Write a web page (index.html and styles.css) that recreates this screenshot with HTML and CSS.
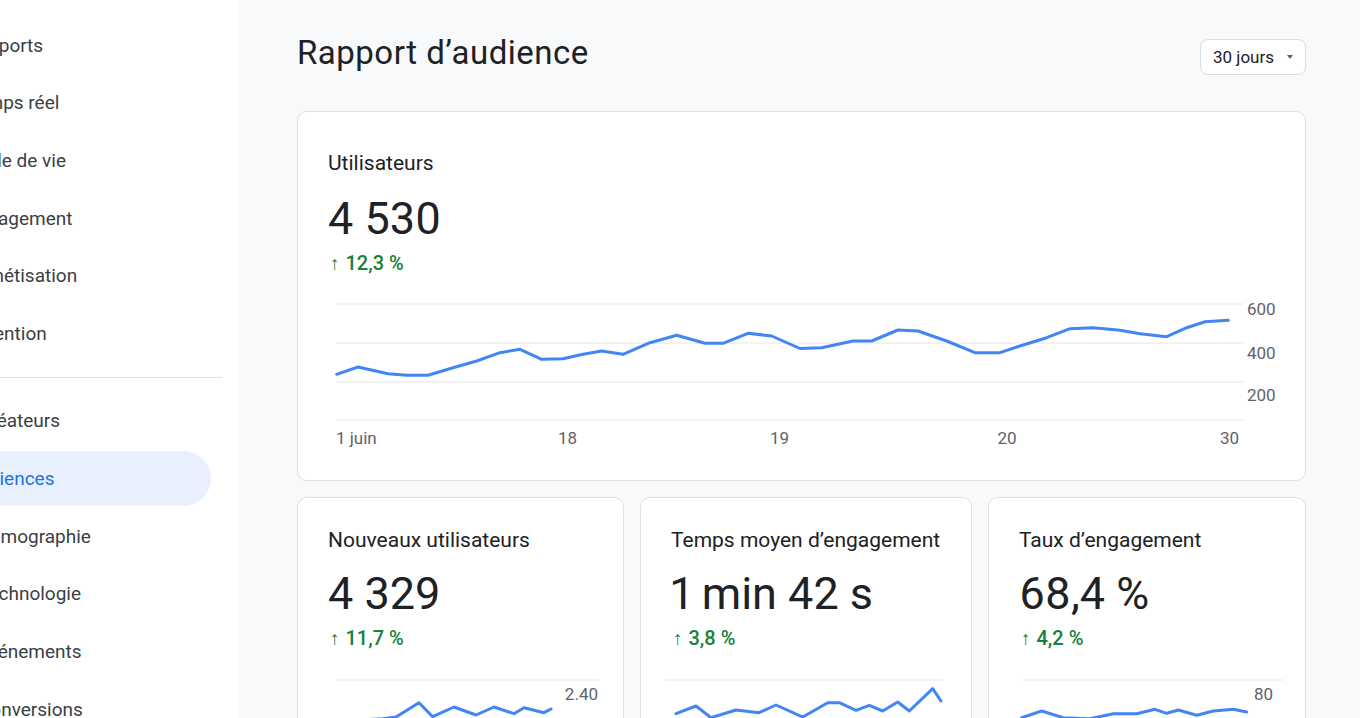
FILE: index.html
```html
<!DOCTYPE html>
<html lang="fr">
<head>
<meta charset="utf-8">
<title>Rapport d’audience</title>
<link rel="stylesheet" href="styles.css">
</head>
<body>
<aside class="sidebar">
  <nav class="nav">
    <a class="nav-item">Rapports</a>
    <a class="nav-item">Temps réel</a>
    <a class="nav-item">Cycle de vie</a>
    <a class="nav-item">Engagement</a>
    <a class="nav-item">Monétisation</a>
    <a class="nav-item">Rétention</a>
    <div class="nav-divider"></div>
    <a class="nav-item sub">Créateurs</a>
    <a class="nav-item active">Audiences</a>
    <a class="nav-item sub">Démographie</a>
    <a class="nav-item sub">Technologie</a>
    <a class="nav-item sub">Événements</a>
    <a class="nav-item sub">Conversions</a>
  </nav>
</aside>
<main class="main">
  <header class="page-header">
    <h1 class="page-title">Rapport d’audience</h1>
    <button class="range-btn"><span>30 jours</span><span class="caret"></span></button>
  </header>

  <section class="card card-main">
    <div class="metric-title">Utilisateurs</div>
    <div class="metric-value">4 530</div>
    <div class="metric-delta"><span class="arrow">↑</span>12,3 %</div>
    <svg class="chart-main" width="947" height="160" viewBox="0 0 947 160">
      <g class="grid">
        <line x1="8" y1="11" x2="915" y2="11"/>
        <line x1="8" y1="50" x2="915" y2="50"/>
        <line x1="8" y1="89" x2="915" y2="89"/>
        <line x1="8" y1="127" x2="915" y2="127"/>
      </g>
      <polyline class="line" points="8.7,81.3 30,74 60,80.7 78.7,82.3 100,82.3 125,74.7 148.7,68 172,59.7 192,56.3 213.7,66.3 235,65.7 255,61.3 273.7,58 295,61.3 322,49.7 348.7,42.3 377,50.3 395,50.3 420,40.3 443.7,43 472,55.5 493.7,54.7 525,48 543.7,48 570,37 590,38 618.7,48 647,59.7 672,59.7 692,53 718.7,44.7 742,35.7 765,34.7 792,37.3 812,40.7 838.7,43.7 858.7,34.7 877,28.7 900.3,27.3"/>
      <g class="axis">
        <text x="919" y="22">600</text>
        <text x="919" y="66">400</text>
        <text x="919" y="108">200</text>
        <text x="8" y="151">1 juin</text>
        <text x="239.5" y="151" text-anchor="middle">18</text>
        <text x="451.5" y="151" text-anchor="middle">19</text>
        <text x="679" y="151" text-anchor="middle">20</text>
        <text x="911" y="151" text-anchor="end">30</text>
      </g>
    </svg>
  </section>

  <div class="card-row">
    <section class="card card-small">
      <div class="metric-title">Nouveaux utilisateurs</div>
      <div class="metric-value">4 329</div>
      <div class="metric-delta"><span class="arrow">↑</span>11,7 %</div>
      <svg class="spark" width="265" height="60" viewBox="0 0 265 60">
        <line class="grid-line" x1="8" y1="7" x2="270" y2="7"/>
        <polyline class="line" points="8,48 32,47 54.7,45.7 68,44 91,29.7 104.7,43.7 126,34 148,42 166,34 186,40.7 196,34.7 216,39.7 223,36"/>
        <text class="axis-label" x="270" y="27" text-anchor="end">2.40</text>
      </svg>
    </section>
    <section class="card card-small">
      <div class="metric-title">Temps moyen d’engagement</div>
      <div class="metric-value">1 min 42 s</div>
      <div class="metric-delta"><span class="arrow">↑</span>3,8 %</div>
      <svg class="spark" width="270" height="60" viewBox="0 0 270 60">
        <line class="grid-line" x1="-5" y1="7" x2="271" y2="7"/>
        <polyline class="line" points="5,40.7 25,33 40,44.7 65,37 88,39.7 105,32 131.7,44 156.7,29.7 168.3,29.7 185,37.3 198.3,32.3 211.7,38 226.7,29 238.3,38 261.7,15.7 270,28"/>
      </svg>
    </section>
    <section class="card card-small">
      <div class="metric-title">Taux d’engagement</div>
      <div class="metric-value">68,4 %</div>
      <div class="metric-delta"><span class="arrow">↑</span>4,2 %</div>
      <svg class="spark" width="256" height="60" viewBox="0 0 256 60">
        <line class="grid-line" x1="3" y1="7" x2="264" y2="7"/>
        <polyline class="line" points="2.7,44.7 22.7,38 44.3,44.7 71,45.7 94.3,40.7 117.7,40.7 136,36.3 147.7,40.3 159.3,37 177.7,42.3 194.3,38 214.3,36.3 227.7,39"/>
        <text class="axis-label" x="254" y="27" text-anchor="end">80</text>
      </svg>
    </section>
  </div>
</main>
</body>
</html>
```

FILE: styles.css
```css
* {
  box-sizing: border-box;
}

html, body {
  margin: 0;
  padding: 0;
}

body {
  display: flex;
  height: 718px;
  overflow: hidden;
  font-family: Roboto, "Liberation Sans", sans-serif;
  color: #202124;
  background: #f8f9fa;
}

/* Sidebar */
.sidebar {
  flex: 0 0 238px;
  width: 238px;
  height: 100%;
  background: #ffffff;
  overflow: hidden;
}

.nav {
  display: flex;
  flex-direction: column;
  gap: 2.7px;
  padding-top: 17.5px;
}

.nav-item {
  display: flex;
  align-items: center;
  height: 55px;
  margin-left: -40px;
  margin-right: 27px;
  padding-left: 6px;
  font-size: 19px;
  color: #3c4043;
  white-space: nowrap;
  border-radius: 0 28px 28px 0;
}

.nav-item.sub {
  padding-left: 18px;
}

.nav-item.active {
  background: #e8f0fe;
  color: #1a73e8;
}

.nav-divider {
  height: 1px;
  background: #e3e3e3;
  margin: 13.3px 16px 12.8px 0;
}

/* Main */
.main {
  flex: 1;
  min-width: 0;
  padding: 0 54px 0 59px;
}

.page-header {
  display: flex;
  justify-content: space-between;
  align-items: flex-start;
  padding-top: 33px;
}

.page-title {
  margin: 0;
  font-size: 33px;
  line-height: 40px;
  font-weight: 400;
  letter-spacing: 0.5px;
  color: #202124;
}

.range-btn {
  display: flex;
  align-items: center;
  gap: 13px;
  height: 36px;
  margin-top: 6px;
  padding: 0 12px;
  border: 1px solid #dadce0;
  border-radius: 8px;
  background: #ffffff;
  font-family: inherit;
  font-size: 17px;
  color: #202124;
}

.caret {
  width: 0;
  height: 0;
  border-left: 3.5px solid transparent;
  border-right: 3.5px solid transparent;
  border-top: 4px solid #5f6368;
}

/* Cards */
.card {
  background: #ffffff;
  border: 1px solid #e0e0e0;
  border-radius: 10px;
  padding: 0 30px;
}

.card-main {
  margin-top: 36px;
  height: 370px;
  padding-top: 37px;
}

.card-row {
  display: grid;
  grid-template-columns: 327fr 332fr 318fr;
  gap: 16px;
  margin-top: 16px;
}

.card-small {
  padding-top: 28px;
  height: 260px;
}

.metric-title {
  font-size: 21px;
  line-height: 28px;
  color: #202124;
  white-space: nowrap;
}

.metric-value {
  font-size: 45px;
  line-height: 52px;
  color: #202124;
  white-space: nowrap;
  font-feature-settings: "pnum";
}

.card-main .metric-value {
  margin-top: 16px;
}

.card-small .metric-value {
  margin-top: 14px;
}

.metric-delta {
  display: flex;
  align-items: baseline;
  margin-top: 6px;
  padding-left: 2px;
  font-size: 20px;
  line-height: 24px;
  font-weight: 500;
  color: #188038;
  white-space: nowrap;
}

.metric-delta .arrow {
  margin-right: 6px;
  font-size: 19px;
  font-weight: 400;
}

.chart-main {
  display: block;
  margin-top: 16.5px;
  overflow: visible;
}

.spark {
  display: block;
  margin-top: 22px;
  overflow: visible;
}

.grid line,
.grid-line {
  stroke: #e6e6e6;
  stroke-width: 1.2;
}

.line {
  fill: none;
  stroke: #4285f4;
  stroke-width: 3;
  stroke-linejoin: round;
  stroke-linecap: round;
}

.axis text,
.axis-label {
  font-family: Roboto, "Liberation Sans", sans-serif;
  font-size: 17px;
  fill: #5f6368;
}
```
